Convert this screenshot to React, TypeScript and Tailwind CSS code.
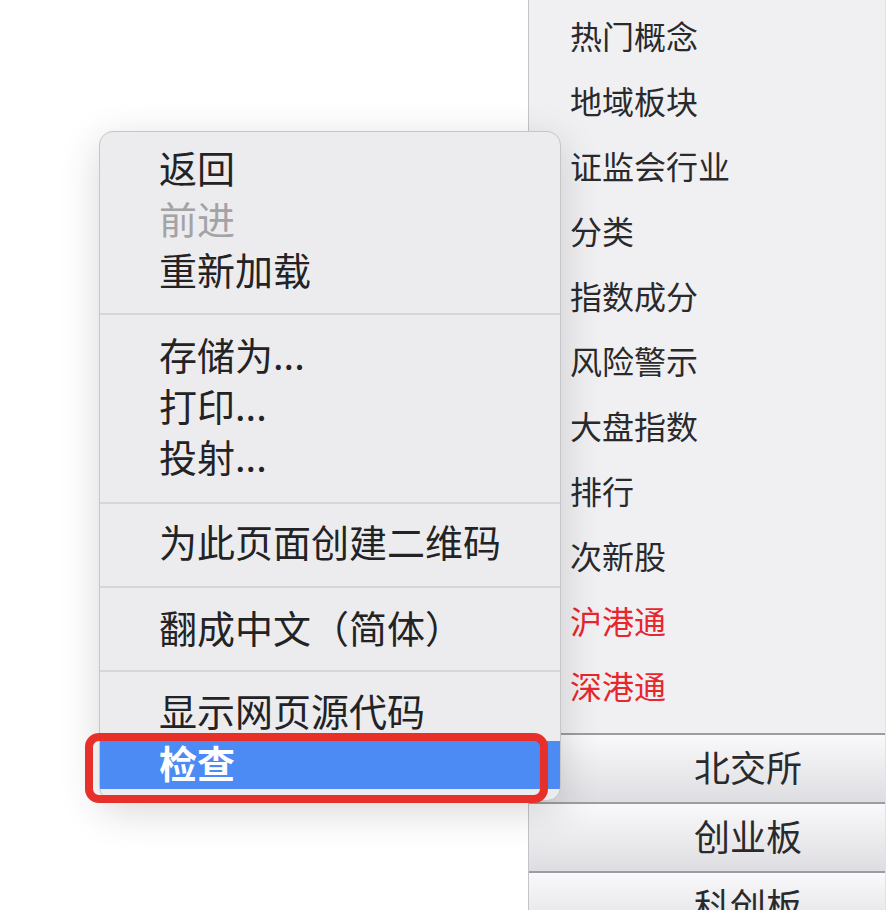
import React from "react";

const font = { fontFamily: '"Noto Sans CJK SC", "Noto Sans", sans-serif' };

const listItems: { t: string; red?: boolean }[] = [
  { t: "热门概念" },
  { t: "地域板块" },
  { t: "证监会行业" },
  { t: "分类" },
  { t: "指数成分" },
  { t: "风险警示" },
  { t: "大盘指数" },
  { t: "排行" },
  { t: "次新股" },
  { t: "沪港通", red: true },
  { t: "深港通", red: true },
];

function Sep() {
  return <div className="h-[2px] bg-[#d6d6d8]" />;
}

function Item({ children, disabled }: { children: React.ReactNode; disabled?: boolean }) {
  return (
    <div
      className={
        "h-[51px] leading-[47px] pl-[59px] text-[38px] whitespace-nowrap " +
        (disabled ? "text-[#a3a3a6]" : "text-[#232325]")
      }
    >
      {children}
    </div>
  );
}

export default function App() {
  return (
    <div className="relative w-[886px] h-[910px] overflow-hidden bg-white flex" style={font}>
      <div className="w-[528px] shrink-0 bg-white" />
      <div className="flex-1 flex flex-col bg-[#f0f0f3] border-l border-[#c4c4c8] border-r border-r-[#e2e2e6]">
        <div className="pt-[5px] pb-[13px]">
          {listItems.map((it) => (
            <div
              key={it.t}
              className={
                "h-[65px] flex items-center pl-[41px] pb-[5px] text-[32px] " +
                (it.red ? "text-[#e8262d]" : "text-[#2a2a2c]")
              }
            >
              {it.t}
            </div>
          ))}
        </div>
        {["北交所", "创业板", "科创板"].map((b) => (
          <div
            key={b}
            className="h-[69px] shrink-0 border-t-2 border-[#9c9ca2] bg-gradient-to-b from-[#f9f9fb] to-[#dedee2] flex items-center pl-[165px] pb-[6px] text-[36px] text-[#2a2a2c]"
          >
            {b}
          </div>
        ))}
      </div>

      {/* context menu */}
      <div className="absolute left-[99px] top-[131px] w-[462px] h-[670px] rounded-[14px] border border-[#c6c6c9] bg-[#ececee] shadow-[0_10px_40px_rgba(0,0,0,0.16)] overflow-hidden">
        <div className="pt-[11px] pb-[17px]">
          <Item>返回</Item>
          <Item disabled>前进</Item>
          <Item>重新加载</Item>
        </div>
        <Sep />
        <div className="pt-[15px] pb-[19px]">
          <Item>存储为...</Item>
          <Item>打印...</Item>
          <Item>投射...</Item>
        </div>
        <Sep />
        <div className="pt-[13px] pb-[18px]">
          <Item>为此页面创建二维码</Item>
        </div>
        <Sep />
        <div className="pt-[15px] pb-[16px]">
          <Item>翻成中文（简体）</Item>
        </div>
        <Sep />
        <div className="pt-[14px]">
          <Item>显示网页源代码</Item>
          <div className="mt-[4px] h-[48px] leading-[41px] bg-[#4c8bf3] pl-[59px] text-[38px] font-bold text-white">
            检查
          </div>
        </div>
      </div>

      {/* red highlight box */}
      <div className="absolute left-[85px] top-[733px] w-[463px] h-[70px] rounded-[14px] border-[8px] border-[#e8302a]" />
    </div>
  );
}
